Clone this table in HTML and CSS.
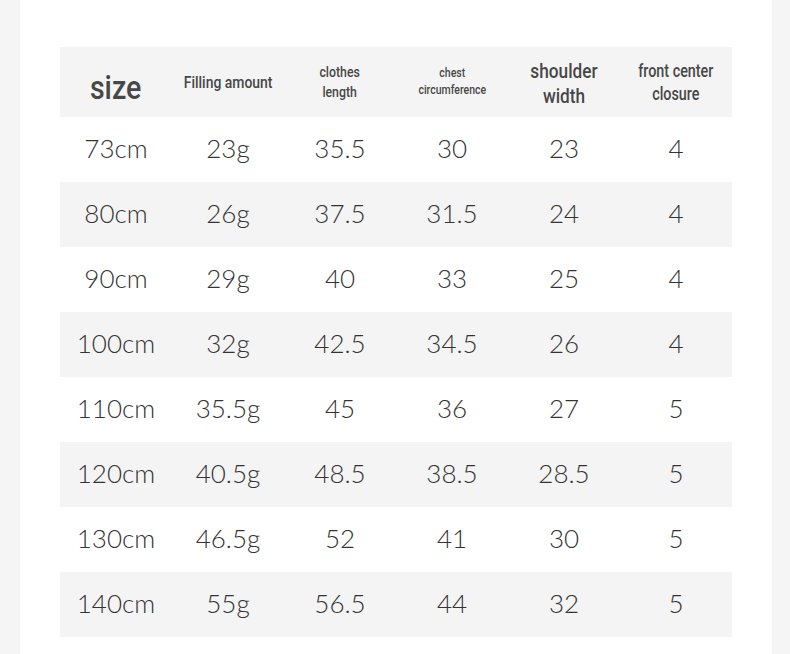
FILE: index.html
```html
<!DOCTYPE html>
<html>
<head>
<meta charset="utf-8">
<link rel="stylesheet" href="styles.css">
</head>
<body>
<div class="card">
  <table class="sizes">
    <thead>
      <tr>
        <th class="h-size"><span class="cond">size</span></th>
        <th class="h-fill"><span class="cond">Filling amount</span></th>
        <th class="h-len"><span class="cond">clothes<br>length</span></th>
        <th class="h-chest"><span class="cond">chest<br>circumference</span></th>
        <th class="h-shoulder"><span class="cond">shoulder<br>width</span></th>
        <th class="h-front"><span class="cond">front center<br>closure</span></th>
      </tr>
    </thead>
    <tbody>
      <tr><td>73cm</td><td>23g</td><td>35.5</td><td>30</td><td>23</td><td>4</td></tr>
      <tr><td>80cm</td><td>26g</td><td>37.5</td><td>31.5</td><td>24</td><td>4</td></tr>
      <tr><td>90cm</td><td>29g</td><td>40</td><td>33</td><td>25</td><td>4</td></tr>
      <tr><td>100cm</td><td>32g</td><td>42.5</td><td>34.5</td><td>26</td><td>4</td></tr>
      <tr><td>110cm</td><td>35.5g</td><td>45</td><td>36</td><td>27</td><td>5</td></tr>
      <tr><td>120cm</td><td>40.5g</td><td>48.5</td><td>38.5</td><td>28.5</td><td>5</td></tr>
      <tr><td>130cm</td><td>46.5g</td><td>52</td><td>41</td><td>30</td><td>5</td></tr>
      <tr><td>140cm</td><td>55g</td><td>56.5</td><td>44</td><td>32</td><td>5</td></tr>
    </tbody>
  </table>
</div>
</body>
</html>
```
FILE: styles.css
```css
html, body {
  margin: 0;
  padding: 0;
  background: #f5f5f5;
}
.card {
  margin-left: 20px;
  width: 752px;
  height: 654px;
  background: #ffffff;
  padding: 47px 40px 0;
  box-sizing: border-box;
}
.sizes {
  width: 672px;
  border-collapse: collapse;
  table-layout: fixed;
}
.sizes thead tr {
  height: 70px;
}
.sizes th {
  padding: 0;
  background: #f4f4f4;
  font-family: "Roboto", sans-serif;
  font-weight: 500;
  color: #474747;
  text-align: center;
  vertical-align: middle;
  white-space: nowrap;
}
.cond {
  display: inline-block;
  transform: scaleX(0.82);
  transform-origin: center;
}
.h-size {
  font-size: 34px;
  line-height: 34px;
}
.h-size .cond {
  transform: scaleX(0.84) translateY(5px);
}
.h-fill { font-size: 17px; line-height: 20px; }
.h-len { font-size: 15px; line-height: 20px; }
.h-chest { font-size: 12.5px; line-height: 17px; }
.h-chest .cond { transform: scaleX(0.84) translateY(-1px); }
.h-shoulder { font-size: 21px; line-height: 25px; }
.h-shoulder .cond { transform: scaleX(0.82) translateY(2px); }
.h-front { font-size: 17.5px; line-height: 23px; }
.h-front .cond { transform: scaleX(0.82) translateY(1px); }
.sizes tbody tr {
  height: 65px;
}
.sizes td {
  padding: 0 0 3px;
  text-align: center;
  vertical-align: middle;
  font-family: "Lato", "Open Sans", sans-serif;
  font-weight: 300;
  font-size: 26px;
  color: #333;
}
.sizes tbody tr:nth-child(even) td {
  background: #f4f4f4;
}
```
